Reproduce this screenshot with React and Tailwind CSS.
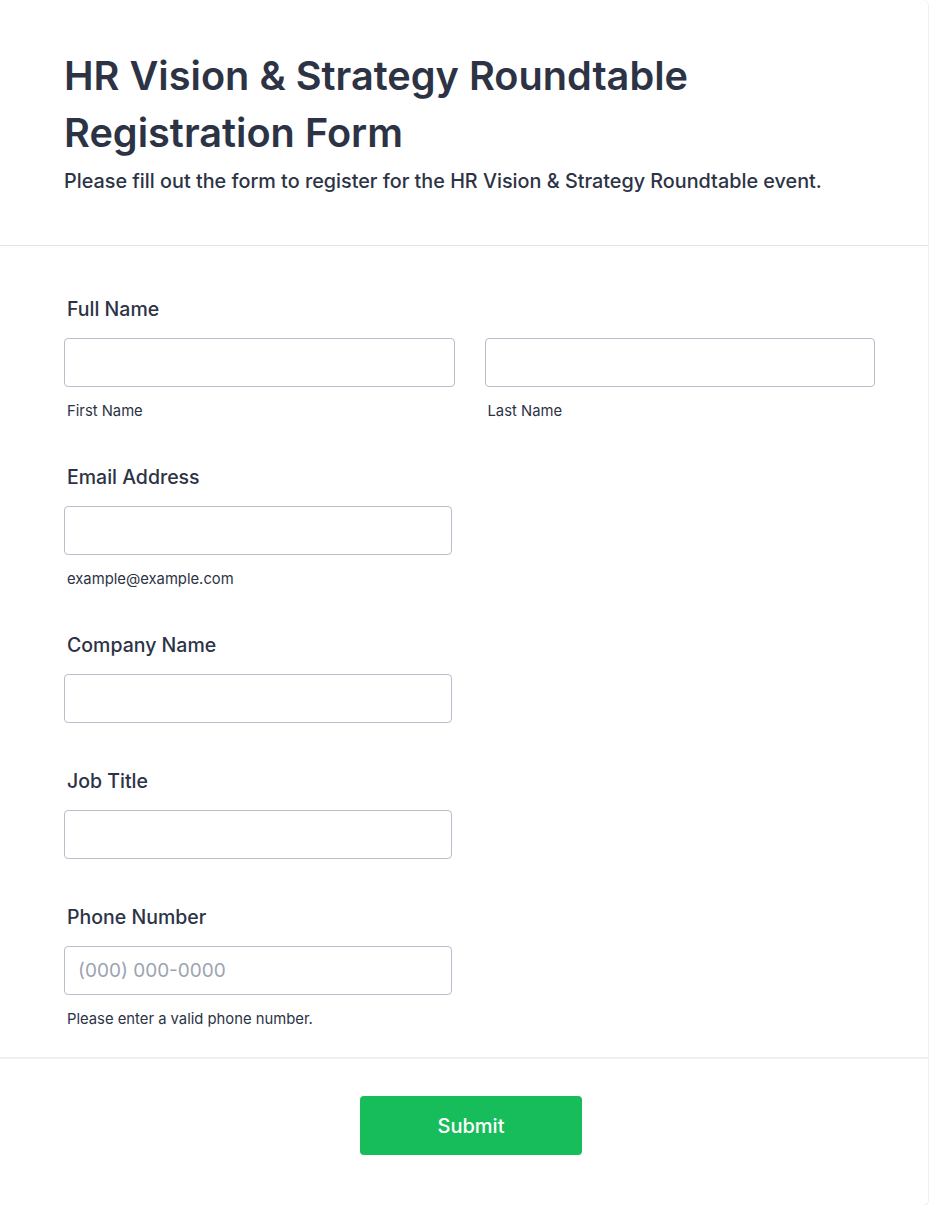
import React from 'react'

// Event registration form, Jotform-like card layout.

const input = 'block h-[49px] w-full rounded-[4px] border border-[#b8bdc9] bg-white px-3 text-[19px] text-[#2c3345] outline-none placeholder:text-[#9ca3b0]'
const labelCls = 'block pl-[3px] text-[19.5px] font-medium leading-6 text-[#2c3345]'
const subCls = 'mt-[14px] pl-[3px] text-[14.8px] leading-5 text-[#2c3345]'

function Field({ label, sub, gap = 'mt-[17px]', children, last }) {
  return (
    <div className={last ? '' : 'mb-[44px]'}>
      <label className={labelCls}>{label}</label>
      <div className={gap}>{children}</div>
      {sub && <p className={subCls}>{sub}</p>}
    </div>
  )
}

export default function App() {
  return (
    <div className="min-h-[1205px] bg-white font-['Inter',sans-serif]">
      <div className="w-[929px] rounded-br-[6px] rounded-tr-[6px] border-r border-b border-[#eeeef4] bg-white">
        <header className="border-b border-[#e3e4ea] px-16 pt-[48px] pb-[49px]">
          <h1 className="text-[39.7px] font-semibold leading-[57px] text-[#2c3345]">
            HR Vision &amp; Strategy Roundtable
            <br />
            Registration Form
          </h1>
          <p className="mt-[4px] text-[19.8px] font-medium leading-[30px] text-[#2c3345]">
            Please fill out the form to register for the HR Vision &amp; Strategy Roundtable event.
          </p>
        </header>

        <div className="border-b-2 border-[#efeff4] px-16 pt-[51px] pb-[28px]">
          <Field label="Full Name">
            <div className="grid w-[811px] grid-cols-2 gap-[30px]">
              <div>
                <input className={input} />
                <p className={subCls}>First Name</p>
              </div>
              <div>
                <input className={input} />
                <p className={subCls}>Last Name</p>
              </div>
            </div>
          </Field>

          <Field label="Email Address" sub="example@example.com">
            <input className={`${input} max-w-[388px]`} />
          </Field>

          <div className="mb-[46px]">
            <label className={labelCls}>Company Name</label>
            <input className={`${input} mt-[17px] max-w-[388px]`} />
          </div>

          <div className="mb-[46px]">
            <label className={labelCls}>Job Title</label>
            <input className={`${input} mt-[17px] max-w-[388px]`} />
          </div>

          <Field label="Phone Number" sub="Please enter a valid phone number." last>
            <input className={`${input} max-w-[388px] px-[13px]`} placeholder="(000) 000-0000" />
          </Field>
        </div>

        <div className="flex justify-center pt-[37px] pb-[50px]">
          <button className="ml-[14px] h-[59px] w-[222px] rounded-[4px] bg-[#18bd5b] text-[20px] font-medium text-white">
            Submit
          </button>
        </div>
      </div>
    </div>
  )
}
